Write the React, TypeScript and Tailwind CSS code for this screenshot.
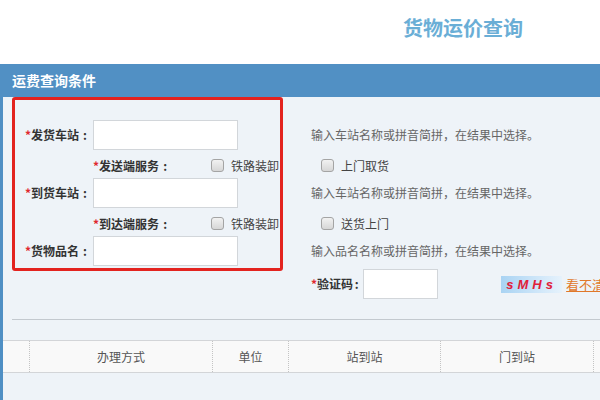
const cjk = { fontFamily: '"Microsoft YaHei", "Noto Sans CJK SC", "Liberation Sans", sans-serif' };

function Box() {
  return (
    <span className="inline-block h-[13px] w-[13px] shrink-0 rounded-[3px] border border-[#a4a4a4] bg-gradient-to-b from-[#f2f2f2] to-[#d6d6d6]" />
  );
}

function Field() {
  return <div className="h-[30px] w-[145px] border border-[#d2d6da] bg-white" />;
}

function Label({ text, tight = false }: { text: string; tight?: boolean }) {
  return (
    <span className="inline-flex whitespace-nowrap font-bold text-[#333]">
      <span className="text-[#e0282e]">*</span>
      {text}
      <span className={tight ? "w-[7px] text-center" : "w-[12px] text-center"}>:</span>
    </span>
  );
}

const hint = "输入车站名称或拼音简拼，在结果中选择。";

export default function App() {
  return (
    <div className="flex h-[400px] w-[600px] flex-col overflow-hidden bg-white text-[12px]" style={cjk}>
      <div className="flex h-[64px] shrink-0 justify-end pr-[77px] pt-[15px]">
        <h1 className="text-[20px] font-bold leading-[26px] text-[#6aaed6]">货物运价查询</h1>
      </div>

      <div className="flex h-[33px] shrink-0 items-center bg-[#5190c4] pl-[12px] text-[14px] font-bold text-white">
        运费查询条件
      </div>

      <div className="relative flex-1 border-l-[3px] border-[#4f8fc4] bg-[#eef3f8]">
        {/* red annotation frame */}
        <div className="pointer-events-none absolute left-[9px] top-0 h-[174px] w-[271px] rounded-[3px] border-[3px] border-[#e3231f]" />

        <div className="grid grid-cols-[90px_218px_1fr] pt-[23px] leading-none">
          {/* 发货车站 */}
          <div className="flex h-[30px] items-center justify-end pr-[2px]">
            <Label text="发货车站" />
          </div>
          <Field />
          <div className="flex items-center text-[#666]">{hint}</div>

          {/* 发送端服务 */}
          <div className="h-[28px]" />
          <div className="flex items-center pt-[3px]">
            <span className="w-[118px]">
              <Label text="发送端服务" />
            </span>
            <Box />
            <span className="ml-[7px] text-[#444]">铁路装卸</span>
          </div>
          <div className="flex items-center pl-[10px] pt-[3px]">
            <Box />
            <span className="ml-[7px] text-[#444]">上门取货</span>
          </div>

          {/* 到货车站 */}
          <div className="flex h-[30px] items-center justify-end pr-[2px]">
            <Label text="到货车站" />
          </div>
          <Field />
          <div className="flex items-center text-[#666]">{hint}</div>

          {/* 到达端服务 */}
          <div className="h-[28px]" />
          <div className="flex items-center pt-[3px]">
            <span className="w-[118px]">
              <Label text="到达端服务" />
            </span>
            <Box />
            <span className="ml-[7px] text-[#444]">铁路装卸</span>
          </div>
          <div className="flex items-center pl-[10px] pt-[3px]">
            <Box />
            <span className="ml-[7px] text-[#444]">送货上门</span>
          </div>

          {/* 货物品名 */}
          <div className="flex h-[30px] items-center justify-end pr-[2px]">
            <Label text="货物品名" />
          </div>
          <Field />
          <div className="flex items-center text-[#666]">输入品名名称或拼音简拼，在结果中选择。</div>

          {/* 验证码 */}
          <div />
          <div />
          <div className="mt-[3px] flex items-center whitespace-nowrap">
            <Label text="验证码" tight />
            <div className="ml-[3px] h-[30px] w-[75px] shrink-0 border border-[#d2d6da] bg-white" />
            <div
              className="ml-[63px] flex h-[17px] w-[61px] shrink-0 items-center justify-center bg-gradient-to-r from-[#a9d3f3] via-[#c8e3f8] to-[#e6f2fc] text-[13px] font-bold italic tracking-[4px] text-[#e0203a]"
              style={{ fontFamily: '"Liberation Sans", Arial, sans-serif' }}
            >
              sMHs
            </div>
            <a className="ml-[4px] text-[13px] text-[#e0782a] underline">看不清</a>
          </div>
        </div>

        <div className="ml-[9px] mt-[20px] h-px bg-[#c3c9cf]" />

        <div className="mt-[20px] flex h-[33px] border-y border-[#d3d5d8] bg-[#f9f9f9] text-[12px] text-[#555]">
          <div className="w-[26px]" />
          <div className="flex w-[183px] items-center justify-center border-l border-dotted border-[#c4c4c4]">办理方式</div>
          <div className="flex w-[76px] items-center justify-center border-l border-dotted border-[#c4c4c4]">单位</div>
          <div className="flex w-[152px] items-center justify-center border-l border-dotted border-[#c4c4c4]">站到站</div>
          <div className="flex w-[153px] items-center justify-center border-l border-dotted border-[#c4c4c4]">门到站</div>
          <div className="flex-1 border-l border-dotted border-[#c4c4c4]" />
        </div>
      </div>
    </div>
  );
}
